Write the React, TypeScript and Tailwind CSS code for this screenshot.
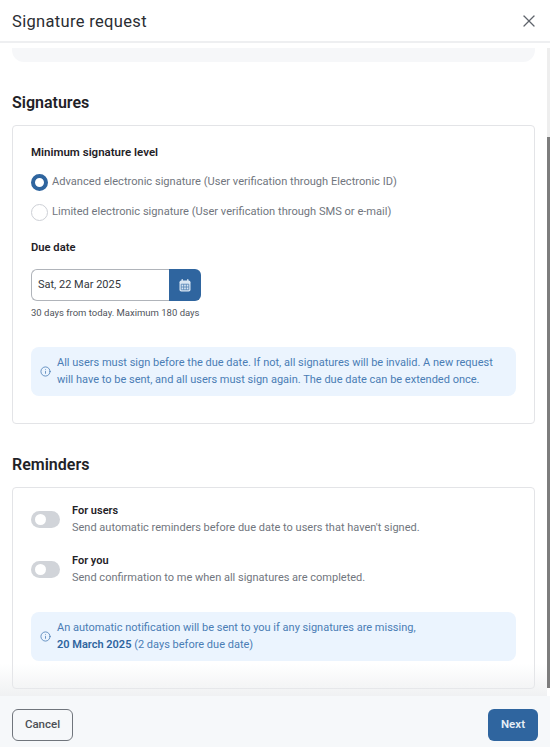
import { Info, X } from "lucide-react";

function Notice({ children }: { children: React.ReactNode }) {
  return (
    <div className="flex h-[49px] items-center gap-[6px] rounded-lg bg-[#ebf4fe] pl-[9px] text-[11px] leading-[16.5px] text-[#4a7db5]">
      <Info className="h-[11px] w-[11px] shrink-0" strokeWidth={1.75} />
      <p>{children}</p>
    </div>
  );
}

function Radio({ checked, label }: { checked?: boolean; label: string }) {
  return (
    <div className="flex h-[30px] items-center gap-[4px]">
      <span
        className={
          checked
            ? "h-[17px] w-[17px] rounded-full border-[4px] border-[#2f659f] bg-white"
            : "h-[17px] w-[17px] rounded-full border-[1.5px] border-[#cdd0d6] bg-white"
        }
      />
      <span className="text-[11.1px] text-[#71767e]">{label}</span>
    </div>
  );
}

function ReminderRow({ title, text }: { title: string; text: string }) {
  return (
    <div className="flex h-[49.5px] items-center gap-[12px]">
      <span className="flex h-[17px] w-[29px] shrink-0 items-center rounded-full bg-[#d1d4d9] pl-[4px]">
        <span className="h-[11px] w-[11px] rounded-full bg-white" />
      </span>
      <div>
        <p className="text-[11px] leading-[16px] font-semibold text-[#1f2227]">{title}</p>
        <p className="text-[11px] leading-[17px] text-[#71767e]">{text}</p>
      </div>
    </div>
  );
}

function CalendarIcon() {
  return (
    <svg viewBox="0 0 12 13" className="h-[13px] w-[12px]" fill="none">
      <rect x="2.5" y="0" width="1.4" height="3" rx="0.7" fill="#dbe7f3" />
      <rect x="8.1" y="0" width="1.4" height="3" rx="0.7" fill="#dbe7f3" />
      <rect x="0.5" y="1.5" width="11" height="11" rx="1.8" fill="#dbe7f3" />
      <path d="M2.2 5.2h7.6v5.6H2.2zM4.7 5.2v5.6M7.3 5.2v5.6M2.2 8h7.6" stroke="#4f80b3" strokeWidth="0.8" />
    </svg>
  );
}

export default function App() {
  return (
    <div className="flex h-[747px] w-[550px] flex-col overflow-hidden bg-white font-['Roboto',sans-serif]">
      <header className="flex h-[43px] shrink-0 items-center justify-between border-b-2 border-[#eeeff1] pr-[11px] pl-[12px]">
        <h1 className="pt-[3px] text-[16.5px] tracking-[0.02em] text-[#2a2d32]">Signature request</h1>
        <X className="h-[20px] w-[20px] text-[#5f646c]" strokeWidth={1.5} />
      </header>

      <div className="flex min-h-0 flex-1">
        <main className="relative min-w-0 flex-1 overflow-hidden pt-[5px] pr-[12px] pl-[12px]">
          <div className="h-[14px] w-[523px] rounded-b-[12px] bg-[#f6f7f9]" />

          <h2 className="mt-[31px] text-[16px] leading-[20px] font-semibold text-[#1f2227]">Signatures</h2>
          <section className="mt-[12px] h-[299px] w-[523px] rounded-[4px] border border-[#e3e4e7] px-[18px] pt-[18px]">
            <h3 className="text-[11.5px] leading-[16px] font-semibold text-[#1f2227]">Minimum signature level</h3>
            <div className="mt-[7px]">
              <Radio checked label="Advanced electronic signature (User verification through Electronic ID)" />
              <Radio label="Limited electronic signature (User verification through SMS or e-mail)" />
            </div>
            <h3 className="mt-[13px] text-[11.2px] leading-[16px] font-semibold text-[#1f2227]">Due date</h3>
            <div className="mt-[13px] flex h-[32px] w-[170px]">
              <div className="flex flex-1 items-center rounded-l-[6px] border-[1.5px] border-r-0 border-[#b0b4ba] pl-[6px] text-[11px] text-[#33373c]">
                Sat, 22 Mar 2025
              </div>
              <div className="flex w-[32px] items-center justify-center rounded-r-[6px] bg-[#2f659f]">
                <CalendarIcon />
              </div>
            </div>
            <p className="mt-[5px] text-[9.5px] leading-[14px] text-[#50545b]">30 days from today. Maximum 180 days</p>
            <div className="mt-[27px]">
              <Notice>
                All users must sign before the due date. If not, all signatures will be invalid. A new request
                <br />
                will have to be sent, and all users must sign again. The due date can be extended once.
              </Notice>
            </div>
          </section>

          <h2 className="mt-[31px] text-[16px] leading-[20px] font-semibold text-[#1f2227]">Reminders</h2>
          <section className="mt-[12px] h-[202px] w-[523px] rounded-[4px] border border-[#e3e4e7] px-[18px] pt-[7px]">
            <ReminderRow title="For users" text="Send automatic reminders before due date to users that haven't signed." />
            <ReminderRow title="For you" text="Send confirmation to me when all signatures are completed." />
            <div className="mt-[18px]">
              <Notice>
                An automatic notification will be sent to you if any signatures are missing,
                <br />
                <strong className="font-semibold text-[#2f659f]">20 March 2025</strong> (2 days before due date)
              </Notice>
            </div>
          </section>

          <div className="pointer-events-none absolute inset-x-0 bottom-0 h-[32px] bg-gradient-to-b from-transparent to-[#e9ebed]/70" />
        </main>

        <div className="flex w-[3px] shrink-0 flex-col pt-[5px]">
          <div className="h-[89px] bg-[#eeeeee]" />
          <div className="h-[551px] bg-[#7d7d7d]" />
        </div>
      </div>

      <footer className="flex h-[51px] shrink-0 items-start justify-between bg-[#f6f8fa] px-[12px] pt-[13px]">
        <button className="h-[32px] w-[61px] rounded-[6px] border border-[#70757c] text-[11.5px] font-medium text-[#4b4f55]">
          Cancel
        </button>
        <button className="h-[32px] w-[50px] rounded-[6px] bg-[#2f659f] text-[11.5px] font-semibold text-[#e6eef6]">
          Next
        </button>
      </footer>
    </div>
  );
}
